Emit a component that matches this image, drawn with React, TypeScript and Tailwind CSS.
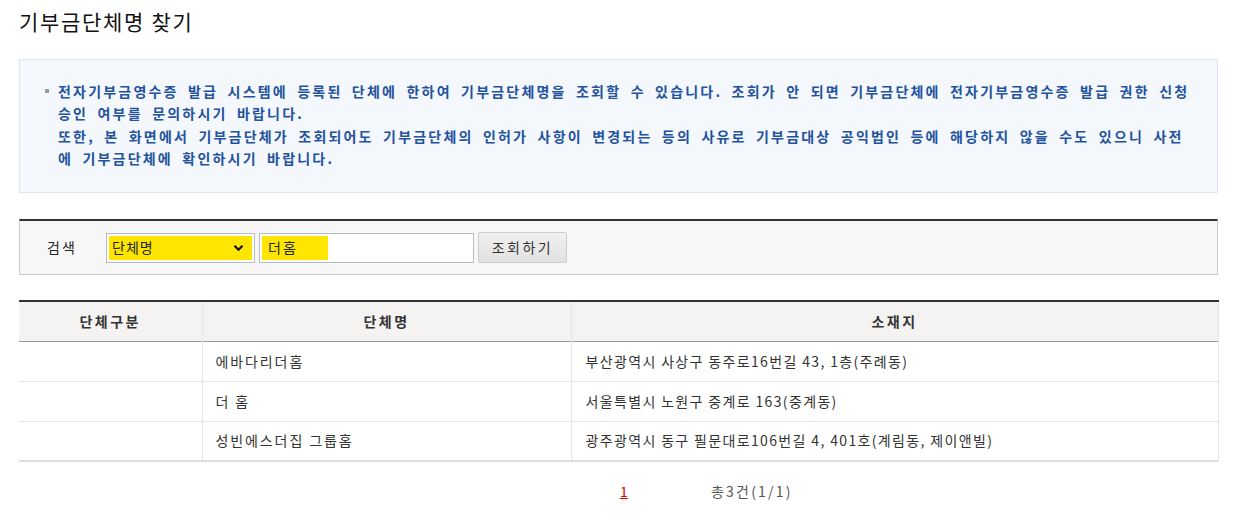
import React from "react";

const rows = [
  { type: "", name: "에바다리더홈", addr: "부산광역시 사상구 동주로16번길 43, 1층(주례동)" },
  { type: "", name: "더 홈", addr: "서울특별시 노원구 중계로 163(중계동)" },
  { type: "", name: "성빈에스더집 그룹홈", addr: "광주광역시 동구 필문대로106번길 4, 401호(계림동, 제이앤빌)" },
];

export default function App() {
  return (
    <div className="w-[1237px] h-[531px] bg-white px-[19px] font-['Noto_Sans_CJK_KR',sans-serif] text-[#333] overflow-hidden">
      <h1 className="pt-[7px] h-[59px] text-[21px] leading-[28px] tracking-[1.7px] text-[#111] font-normal">
        기부금단체명 찾기
      </h1>

      <div className="h-[134px] border border-[#dfe5ec] bg-[#f4f7fc] pt-[20px] pl-[25px]">
        <div className="flex">
          <span className="mt-[9px] mr-[9px] w-[4px] h-[4px] bg-[#999] shrink-0" />
          <p className="text-[14px] leading-[22.3px] font-bold text-[#23539c] tracking-[2.2px] [word-spacing:4px] whitespace-nowrap">
            전자기부금영수증 발급 시스템에 등록된 단체에 한하여 기부금단체명을 조회할 수 있습니다. 조회가 안 되면 기부금단체에 전자기부금영수증 발급 권한 신청
            <br />
            승인 여부를 문의하시기 바랍니다.
            <br />
            또한, 본 화면에서 기부금단체가 조회되어도 기부금단체의 인허가 사항이 변경되는 등의 사유로 기부금대상 공익법인 등에 해당하지 않을 수도 있으니 사전
            <br />
            에 기부금단체에 확인하시기 바랍니다.
          </p>
        </div>
      </div>

      <div className="mt-[26px] h-[56px] border-t-2 border-t-[#333] border-x border-b border-[#ccc] bg-[#f7f7f7] flex items-center">
        <span className="ml-[27px] w-[59px] text-[14px] tracking-[2px] text-[#222]">검색</span>
        <div className="w-[149px] h-[30px] border border-[#bbb] bg-white p-[2px]">
          <div className="h-full bg-[#ffe600] flex items-center justify-between pl-[3px] pr-[8px]">
            <span className="text-[14px] tracking-[1px] text-[#222]">단체명</span>
            <svg width="11" height="8" viewBox="0 0 11 8">
              <path d="M1.5 1.8 L5.5 5.8 L9.5 1.8" fill="none" stroke="#111" strokeWidth="2.2" />
            </svg>
          </div>
        </div>
        <div className="ml-[4px] w-[215px] h-[30px] border border-[#bbb] bg-white p-[2px]">
          <div className="h-full w-[66px] bg-[#ffe600] flex items-center pl-[6px]">
            <span className="text-[14px] tracking-[2px] text-[#222]">더홈</span>
          </div>
        </div>
        <button className="ml-[4px] w-[89px] h-[31px] border border-[#ccc] rounded-[2px] bg-gradient-to-b from-[#f0f0f0] to-[#e2e2e2] text-[14px] tracking-[2.5px] text-[#333]">
          조회하기
        </button>
      </div>

      <table className="mt-[25px] w-[1199px] table-fixed border-collapse border-t-2 border-t-[#333]">
        <colgroup>
          <col className="w-[183px]" />
          <col className="w-[369px]" />
          <col className="w-[647px]" />
        </colgroup>
        <thead>
          <tr className="h-[40px] bg-[#f4f3f2] border-b border-b-[#999]">
            <th className="font-bold text-[14px] tracking-[2.5px] text-[#333] border-r border-r-[#e5e5e5]">단체구분</th>
            <th className="font-bold text-[14px] tracking-[2.5px] text-[#333] border-r border-r-[#e5e5e5]">단체명</th>
            <th className="font-bold text-[14px] tracking-[2.5px] text-[#333] border-r border-r-[#e5e5e5]">소재지</th>
          </tr>
        </thead>
        <tbody>
          {rows.map((r, i) => (
            <tr
              key={i}
              className={
                i === rows.length - 1
                  ? "h-[40px] border-b-2 border-b-[#ddd]"
                  : "h-[40px] border-b border-b-[#e5e5e5]"
              }
            >
              <td className="border-r border-r-[#e5e5e5] text-[14px]">{r.type}</td>
              <td className="border-r border-r-[#e5e5e5] pl-[13px] text-[14px] tracking-[1.9px] text-[#333]">{r.name}</td>
              <td className="border-r border-r-[#e5e5e5] pl-[14px] text-[14px] tracking-[1.35px] text-[#333]">{r.addr}</td>
            </tr>
          ))}
        </tbody>
      </table>

      <div className="mt-[19px] flex items-center text-[14px]">
        <span className="ml-[601px] w-[6px] text-[#e00000] underline">1</span>
        <span className="ml-[85px] tracking-[2.2px] text-[#555]">총3건(1/1)</span>
      </div>
    </div>
  );
}
